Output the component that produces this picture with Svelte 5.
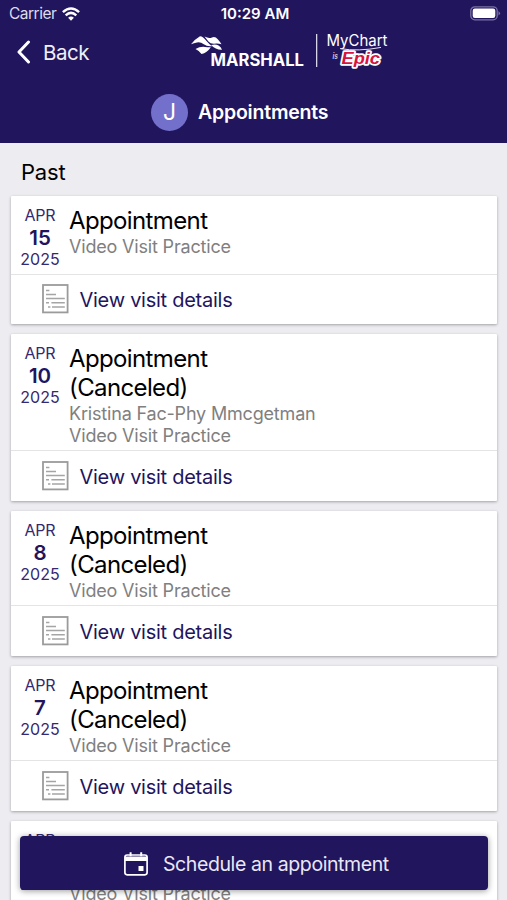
<script>
    const appointments = [
        { month: "APR", day: 15, year: 2025, title: ["Appointment"], info: ["Video Visit Practice"] },
        { month: "APR", day: 10, year: 2025, title: ["Appointment", "(Canceled)"], info: ["Kristina Fac-Phy Mmcgetman", "Video Visit Practice"] },
        { month: "APR", day: 8, year: 2025, title: ["Appointment", "(Canceled)"], info: ["Video Visit Practice"] },
        { month: "APR", day: 7, year: 2025, title: ["Appointment", "(Canceled)"], info: ["Video Visit Practice"] },
        { month: "APR", day: 4, year: 2025, title: ["Appointment"], info: ["Kristina Fac-Phy Mmcgetman", "Video Visit Practice"] },
    ];
</script>

<div class="screen">
    <header>
        <div class="status-bar">
            <div class="carrier">
                <span>Carrier</span>
                <svg class="wifi" viewBox="0 0 18 14" width="18" height="14">
                    <g fill="none" stroke="#fff" stroke-width="2.5">
                        <path d="M0.9 5.2 Q9 -2.2 17.1 5.2" />
                        <path d="M3.7 8.3 Q9 3.4 14.3 8.3" />
                    </g>
                    <path d="M6.1 10.8 Q9 8.2 11.9 10.8 L9 13.7Z" fill="#fff" />
                </svg>
            </div>
            <span class="clock">10:29 AM</span>
            <svg class="battery" viewBox="0 0 31 15" width="31" height="15">
                <rect x="0.8" y="0.8" width="26.4" height="13" rx="4" fill="none" stroke="#7a72a3" stroke-width="1.3" />
                <rect x="2.7" y="2.6" width="22.6" height="9.4" rx="2.2" fill="#fff" />
                <path d="M28.5 5 Q31.5 7.3 28.5 9.6Z" fill="#7a72a3" />
            </svg>
        </div>

        <div class="nav-bar">
            <button class="back">
                <svg viewBox="0 0 15 24" width="15" height="24">
                    <path d="M12.5 2 L3 12 L12.5 22" fill="none" stroke="#fff" stroke-width="3" stroke-linecap="round" stroke-linejoin="round" />
                </svg>
                <span>Back</span>
            </button>
            <svg class="brand" viewBox="0 0 204 40" width="204" height="40">
                <!-- Marshall leaves -->
                <g fill="#fff">
                    <path d="M1 11.3 Q5 6 10 3.2 Q13 3.4 16.5 8 Q19 11 22 13.2 Q17 13.8 13.8 11.2 Q10.5 8.7 7 9.4 Q4 9.9 1 11.3Z" />
                    <path d="M14.5 3.6 Q19 6 22 4.4 Q25 3 28 6.4 Q30 8.6 31.5 11.3 Q27.5 10 24 10.8 Q20.5 11 18.4 8.4Z" />
                    <path d="M5.5 15.9 Q10 13.4 15 13.9 Q18 14.5 20.8 14.3 Q17 20 11.5 21 Q9.2 17.6 5.5 15.9Z" />
                    <path d="M21 12 Q26 10.6 28.5 12.6 Q31 14.2 32 16.8 Q26 17.2 21 12Z" />
                </g>
                <text class="marshall" x="20.5" y="33" textLength="93.5" lengthAdjust="spacingAndGlyphs">MARSHALL</text>
                <rect x="126" y="1" width="1.3" height="33" fill="#d8d5e8" />
                <text class="mychart" x="136.5" y="13.4" textLength="61" lengthAdjust="spacingAndGlyphs">MyChart</text>
                <path d="M150 15.6 Q168 18.8 191 14.4" fill="none" stroke="#e6e4f2" stroke-width="1" />
                <text class="is" x="142.5" y="25.5" textLength="5.5" lengthAdjust="spacingAndGlyphs">is</text>
                <text class="epic" x="151.5" y="31" textLength="38.5" lengthAdjust="spacingAndGlyphs">Epic</text>
            </svg>
        </div>

        <div class="page-title">
            <span class="avatar">J</span>
            <h1>Appointments</h1>
        </div>
    </header>

    <main>
        <h2>Past</h2>
        {#each appointments as appt}
            <article class="card">
                <div class="summary">
                    <div class="date">
                        <span class="month">{appt.month}</span>
                        <span class="day">{appt.day}</span>
                        <span class="year">{appt.year}</span>
                    </div>
                    <div class="text">
                        {#each appt.title as line}
                            <div class="title">{line}</div>
                        {/each}
                        {#each appt.info as line}
                            <div class="info">{line}</div>
                        {/each}
                    </div>
                </div>
                <div class="details">
                    <svg viewBox="0 0 27 30" width="27" height="30">
                        <rect x="1" y="1" width="24.6" height="27.4" fill="#fff" stroke="#9b9b9b" stroke-width="1.8" />
                        <path d="M4 6.6h3.4M4 10.4h10M4 14.6h18.8M4 18.8h3M9.4 18.8h13.4M6 23h2.4M10 23h12.8" stroke="#a5a5a5" stroke-width="1.5" />
                    </svg>
                    <span>View visit details</span>
                </div>
            </article>
        {/each}
    </main>

    <button class="schedule">
        <svg viewBox="0 0 24 24" width="24" height="24">
            <path d="M6.6 0.3v4M17.2 0.3v4" stroke="#fff" stroke-width="2" />
            <rect x="0.9" y="3" width="22.2" height="19.8" rx="2.2" fill="none" stroke="#fff" stroke-width="1.7" />
            <path d="M1 4.5h22v4.5H1z" fill="#fff" />
            <rect x="14.5" y="14" width="5" height="5" fill="#fff" />
        </svg>
        <span>Schedule an appointment</span>
    </button>
</div>

<style>
    :global(body) {
        margin: 0;
        background: #edecf1;
    }
    .screen {
        position: relative;
        width: 507px;
        height: 900px;
        overflow: hidden;
        background: #edecf1;
        font-family: Inter, "Liberation Sans", sans-serif;
        color: #000;
    }
    button {
        border: 0;
        padding: 0;
        font-family: inherit;
        color: #fff;
        background: none;
    }
    header {
        height: 143px;
        background: #21155e;
        color: #fff;
    }
    .status-bar {
        display: grid;
        grid-template-columns: 1fr auto 1fr;
        align-items: center;
        height: 27px;
        padding: 0 6px 0 9px;
        font-size: 15.5px;
        line-height: 27px;
    }
    .carrier {
        display: flex;
        align-items: center;
        gap: 6px;
        letter-spacing: -0.5px;
        color: #dedcea;
    }
    .clock {
        font-size: 15px;
        font-weight: 600;
    }
    .battery {
        justify-self: end;
    }
    .nav-bar {
        display: flex;
        align-items: center;
        height: 52px;
    }
    .back {
        display: flex;
        align-items: center;
        gap: 12px;
        width: 190px;
        padding: 0 0 2px 16px;
        font-size: 20.5px;
        letter-spacing: -0.5px;
        color: #f0eff6;
    }
    .brand {
        overflow: visible;
    }
    .marshall {
        font: 700 17px Inter, sans-serif;
        fill: #fff;
    }
    .mychart {
        font: 400 15.5px Inter, sans-serif;
        fill: #fff;
    }
    .is {
        font: italic 700 9px "Liberation Sans", sans-serif;
        fill: #cbc8de;
    }
    .epic {
        font: italic 700 17px "Liberation Sans", sans-serif;
        fill: #d5143f;
        stroke: #fff;
        stroke-width: 3.4px;
        stroke-linejoin: round;
        paint-order: stroke;
    }
    .page-title {
        display: flex;
        align-items: center;
        gap: 10px;
        height: 66px;
        padding-left: 151px;
    }
    .avatar {
        width: 37px;
        height: 37px;
        border-radius: 50%;
        background: #7370cb;
        font-size: 23px;
        line-height: 37px;
        text-align: center;
    }
    h1 {
        margin: 0;
        font-size: 19.5px;
        font-weight: 600;
        letter-spacing: -0.2px;
    }
    main {
        padding: 0 10px 0 11px;
    }
    h2 {
        margin: 0;
        padding: 3px 0 0 10px;
        height: 50px;
        font-size: 22px;
        line-height: 52px;
        font-weight: 400;
        letter-spacing: -0.2px;
    }
    .card {
        margin-bottom: 9.8px;
        border-radius: 1px;
        background: #fff;
        box-shadow: 0 1px 3px rgba(0, 0, 0, 0.32);
    }
    .summary {
        display: flex;
        min-height: 78.5px;
        box-sizing: border-box;
        border-bottom: 1px solid #e4e4e6;
    }
    .date {
        display: flex;
        flex-direction: column;
        width: 58px;
        padding-top: 8px;
        font-size: 16px;
        line-height: 22px;
        text-align: center;
        color: #35296f;
    }
    .month {
        letter-spacing: -0.2px;
    }
    .day {
        padding-top: 1px;
        margin-bottom: -1px;
        font-size: 20.5px;
        font-weight: 600;
        color: #21155e;
    }
    .text {
        padding: 10.2px 0 3.8px;
    }
    .title {
        font-size: 24px;
        line-height: 29.2px;
        letter-spacing: -0.62px;
    }
    .info {
        padding-top: 0.4px;
        margin-bottom: -0.4px;
        font-size: 18px;
        line-height: 22px;
        letter-spacing: -0.18px;
        color: #808080;
    }
    .details {
        display: flex;
        align-items: center;
        gap: 11px;
        height: 49.8px;
        padding-left: 30.5px;
        font-size: 20px;
        letter-spacing: -0.26px;
        color: #21155e;
    }
    .details span {
        padding-top: 1px;
    }
    .schedule {
        position: absolute;
        left: 20px;
        top: 836px;
        display: flex;
        align-items: center;
        gap: 15px;
        width: 468px;
        height: 54px;
        padding: 1px 0 0 104px;
        border-radius: 4px;
        background: #21155e;
        box-shadow: 0 1px 6px rgba(0, 0, 0, 0.4);
        font-size: 19.5px;
        letter-spacing: -0.4px;
        color: #e9e7f3;
    }
</style>
